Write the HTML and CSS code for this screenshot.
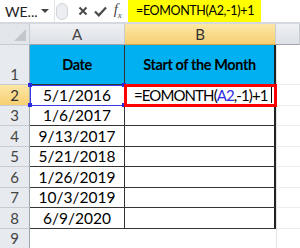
FILE: index.html
```html
<!DOCTYPE html>
<html>
<head>
  <title>EOMONTH</title>
  <link rel="stylesheet" href="styles.css">
</head>
<body>
  <div class="formula-bar">
    <div class="name-box">
      <span>WE...</span>
      <span class="drop"></span>
    </div>
    <div class="splitter"><span class="dimple"></span></div>
    <div class="bar-icons">
      <svg class="icon" width="10" height="10" viewBox="0 0 10 10">
        <path d="M1.5 1.5 L8.5 8.5 M8.5 1.5 L1.5 8.5" stroke="#4a4a4a" stroke-width="2" fill="none"/>
      </svg>
      <svg class="icon" width="13" height="11" viewBox="0 0 13 11">
        <path d="M1 5.5 L4.8 9.3 L12 1.5" stroke="#4a4a4a" stroke-width="2.2" fill="none"/>
      </svg>
      <span class="fx">f<sub>x</sub></span>
    </div>
    <div class="formula-input">
      <span class="highlight">=EOMONTH(A2,-1)+1</span>
    </div>
  </div>

  <div class="sheet">
    <div class="corner"><span class="tri"></span></div>
    <div class="col-head">A</div>
    <div class="col-head active">B</div>
    <div class="col-head">&nbsp;</div>

    <div class="row-head tall">1</div>
    <div class="cell title">Date</div>
    <div class="cell title last">Start of the Month</div>
    <div class="cell blank"></div>

    <div class="row-head active">2</div>
    <div class="cell ref">5/1/2016<i class="h tl"></i><i class="h tr"></i><i class="h bl"></i><i class="h br"></i></div>
    <div class="cell last editing">=EOMONTH(<span class="blue">A2</span>,-1)+1<span class="caret"></span></div>
    <div class="cell blank"></div>

    <div class="row-head">3</div>
    <div class="cell">1/6/2017</div>
    <div class="cell last"></div>
    <div class="cell blank"></div>

    <div class="row-head">4</div>
    <div class="cell">9/13/2017</div>
    <div class="cell last"></div>
    <div class="cell blank"></div>

    <div class="row-head">5</div>
    <div class="cell">5/21/2018</div>
    <div class="cell last"></div>
    <div class="cell blank"></div>

    <div class="row-head">6</div>
    <div class="cell">1/26/2019</div>
    <div class="cell last"></div>
    <div class="cell blank"></div>

    <div class="row-head">7</div>
    <div class="cell">10/3/2019</div>
    <div class="cell last"></div>
    <div class="cell blank"></div>

    <div class="row-head">8</div>
    <div class="cell">6/9/2020</div>
    <div class="cell last"></div>
    <div class="cell blank"></div>

    <div class="row-head">9</div>
    <div class="cell empty"></div>
    <div class="cell empty"></div>
    <div class="cell blank"></div>
  </div>
</body>
</html>
```

FILE: styles.css
```css
body {
  margin: 0;
  width: 300px;
  height: 248px;
  overflow: hidden;
  background: #fff;
  font-family: Lato, "Liberation Sans", sans-serif;
  color: #000;
}

.formula-bar {
  display: flex;
  align-items: stretch;
  height: 22px;
  background: #fff;
  border-bottom: 2px solid #d5d9df;
}

.name-box {
  width: 55px;
  display: flex;
  align-items: center;
  justify-content: space-between;
  padding: 0 5px 0 5px;
  box-sizing: border-box;
  font-size: 14px;
  color: #222;
  border-right: 1px solid #e2e4e8;
}

.drop {
  width: 0;
  height: 0;
  border-left: 4px solid transparent;
  border-right: 4px solid transparent;
  border-top: 4px solid #444;
}

.splitter {
  width: 14px;
  display: flex;
  align-items: center;
  justify-content: center;
}

.dimple {
  width: 10px;
  height: 15px;
  border-radius: 8px;
  background: #eceef1;
  border: 1px solid #d0d3d8;
}

.bar-icons {
  width: 58px;
  display: flex;
  align-items: center;
  justify-content: space-around;
  padding: 0 2px 0 6px;
  box-sizing: border-box;
}

.fx {
  font-family: "Liberation Serif", serif;
  font-style: italic;
  font-size: 15px;
  color: #4a4a4a;
  line-height: 1;
}

.fx sub {
  font-size: 9px;
}

.formula-input {
  flex: 1;
  display: flex;
  padding-left: 1px;
}

.highlight {
  background: #ffff00;
  width: 133px;
  padding-left: 8px;
  box-sizing: border-box;
  font-size: 12.5px;
  letter-spacing: -0.35px;
  line-height: 22px;
  white-space: nowrap;
}

.sheet {
  display: grid;
  grid-template-columns: 30px 95px 151px 24px;
  grid-template-rows: 21px 40px repeat(8, 20.5px);
}

.corner,
.col-head,
.row-head {
  background: #e3e6eb;
  color: #444;
  font-size: 15px;
  display: flex;
  align-items: center;
  justify-content: center;
  box-sizing: border-box;
}

.corner {
  position: relative;
  border-right: 1px solid #c8ccd2;
  border-bottom: 1px solid #c8ccd2;
}

.tri {
  position: absolute;
  right: 3px;
  bottom: 3px;
  width: 0;
  height: 0;
  border-left: 12px solid transparent;
  border-bottom: 12px solid #c3c7cd;
}

.col-head {
  background: linear-gradient(#eef0f3, #dde1e6);
  border-right: 1px solid #c8ccd2;
  border-bottom: 1px solid #9ea4ad;
}

.col-head.active {
  background: linear-gradient(#fde7a6, #f7cf72);
  border-bottom-color: #d1a545;
  color: #333;
}

.row-head {
  background: #e7eaee;
  border-right: 1px solid #9ea4ad;
  border-bottom: 1px solid #c8ccd2;
}

.row-head.tall {
  align-items: flex-end;
  padding-bottom: 1px;
}

.row-head.active {
  background: linear-gradient(#fde7a6, #f7cf72);
  color: #333;
}

.cell {
  display: flex;
  align-items: center;
  justify-content: center;
  font-size: 15.5px;
  border-bottom: 1px solid #333;
  border-right: 1px solid #333;
  box-sizing: border-box;
  position: relative;
  white-space: nowrap;
}

.cell.title {
  background: #00b0f0;
  font-weight: bold;
  font-size: 14.5px;
  letter-spacing: -0.4px;
}

.cell.last {
  border-right: 2px solid #222;
}

.cell.blank {
  border: 0;
  border-left: 1px solid #e4e4e4;
  border-bottom: 1px solid #eeeeee;
}

.cell.empty {
  border: 0;
}

.cell.ref {
  outline: 1px solid #3a3ae8;
  outline-offset: -1px;
}

.h {
  position: absolute;
  width: 4px;
  height: 4px;
  background: #2a2ae0;
}

.tl { left: -2px; top: -2px; }
.tr { right: -2px; top: -2px; }
.bl { left: -2px; bottom: -2px; }
.br { right: -2px; bottom: -2px; }

.cell.editing {
  justify-content: flex-start;
  padding-left: 9px;
  font-size: 15px;
  letter-spacing: -0.9px;
  outline: 3px solid #ff0000;
  outline-offset: -2px;
  z-index: 1;
}

.blue {
  color: #2a2ae0;
}

.caret {
  display: inline-block;
  width: 1px;
  height: 16px;
  background: #000;
  margin-left: 3px;
}
```
